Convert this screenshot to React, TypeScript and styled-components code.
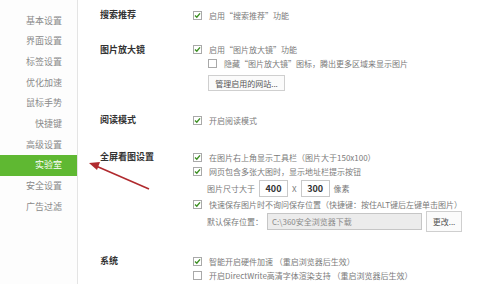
import React from 'react';
import styled, { createGlobalStyle } from 'styled-components';

const GlobalStyle = createGlobalStyle`
  html, body {
    margin: 0;
    padding: 0;
    background: #ffffff;
  }
  * {
    box-sizing: border-box;
  }
`;

const font = `"Microsoft YaHei", "Noto Sans CJK SC", "Noto Sans", sans-serif`;

const navItems = ['基本设置', '界面设置', '标签设置', '优化加速', '鼠标手势', '快捷键', '高级设置', '实验室', '安全设置', '广告过滤'];

const Check: React.FC<{ checked?: boolean }> = ({ checked }) => (
  <Box>
    {checked && (
      <svg width="7" height="7" viewBox="0 0 7 7">
        <path d="M1 3.6 L2.8 5.3 L6 1.4" fill="none" stroke="#3c8f22" strokeWidth="1.4" />
      </svg>
    )}
  </Box>
);

const App: React.FC = () => {
  return (
    <>
      <GlobalStyle />
      <Page>
        <Sidebar>
          {navItems.map((item) => (
            <NavItem key={item} $active={item === '实验室'}>
              {item}
            </NavItem>
          ))}
        </Sidebar>
        <Content>
          <Section $top={8}>
            <Label>搜索推荐</Label>
            <Options>
              <Option>
                <Check checked />
                启用“搜索推荐”功能
              </Option>
            </Options>
          </Section>

          <Section $top={21}>
            <Label>图片放大镜</Label>
            <Options>
              <Option $h={13}>
                <Check checked />
                启用“图片放大镜”功能
              </Option>
              <Option $h={14} $indent>
                <Check />
                隐藏“图片放大镜”图标，腾出更多区域来显示图片
              </Option>
              <Button $width={77} $height={16} $top={5} $left={15}>
                管理启用的网站...
              </Button>
            </Options>
          </Section>

          <Section $top={22}>
            <Label>阅读模式</Label>
            <Options>
              <Option>
                <Check checked />
                开启阅读模式
              </Option>
            </Options>
          </Section>

          <Section $top={23}>
            <Label>全屏看图设置</Label>
            <Options>
              <Option>
                <Check checked />
                在图片右上角显示工具栏（图片大于150x100）
              </Option>
              <Option $h={15}>
                <Check checked />
                网页包含多张大图时，显示地址栏提示按钮
              </Option>
              <FieldRow $h={17} $top={1}>
                图片尺寸大于
                <SizeInput>400</SizeInput>
                X
                <SizeInput>300</SizeInput>
                像素
              </FieldRow>
              <Option>
                <Check checked />
                快速保存图片时不询问保存位置（快捷键：按住ALT键后左键单击图片）
              </Option>
              <FieldRow $h={18} $top={1}>
                默认保存位置：
                <PathInput>C:\360安全浏览器下载</PathInput>
                <Button $width={36} $height={21} $top={0} $left={0}>
                  更改...
                </Button>
              </FieldRow>
            </Options>
          </Section>

          <Section $top={24}>
            <Label>系统</Label>
            <Options>
              <Option>
                <Check checked />
                智能开启硬件加速 （重启浏览器后生效）
              </Option>
              <Option>
                <Check />
                开启DirectWrite高清字体渲染支持 （重启浏览器后生效）
              </Option>
            </Options>
          </Section>
        </Content>

        <Arrow width="488" height="284" viewBox="0 0 488 284">
          <line x1="149" y1="189" x2="96" y2="166" stroke="#b02a2e" strokeWidth="1.6" />
          <polygon points="89,163 100,162 97,170" fill="#b02a2e" />
        </Arrow>
      </Page>
    </>
  );
};

const Page = styled.div`
  position: relative;
  display: flex;
  width: 488px;
  height: 284px;
  overflow: hidden;
  background: #ffffff;
  font-family: ${font};
`;

const Sidebar = styled.nav`
  flex: 0 0 78px;
  padding-top: 10.6px;
  border-right: 1px solid #e4e4e4;
  background: #fdfdfd;
`;

const NavItem = styled.div<{ $active?: boolean }>`
  height: 20.67px;
  padding-right: 15px;
  line-height: 20.67px;
  text-align: right;
  font-size: 9px;
  color: ${({ $active }) => ($active ? '#ffffff' : '#8a8a8a')};
  background: ${({ $active }) => ($active ? '#5fb832' : 'transparent')};
`;

const Content = styled.main`
  flex: 1;
  padding-left: 22px;
`;

const Section = styled.section<{ $top: number }>`
  display: flex;
  margin-top: ${({ $top }) => $top}px;
`;

const Label = styled.div`
  flex: 0 0 93px;
  height: 14px;
  line-height: 14px;
  font-size: 9px;
  font-weight: bold;
  color: #333333;
`;

const Options = styled.div`
  display: flex;
  flex-direction: column;
  align-items: flex-start;
`;

const Option = styled.div<{ $h?: number; $indent?: boolean }>`
  display: flex;
  align-items: center;
  gap: 7px;
  height: ${({ $h }) => $h ?? 14}px;
  padding-left: ${({ $indent }) => ($indent ? 15 : 0)}px;
  font-size: 8px;
  color: #7a7a7a;
  white-space: nowrap;
`;

const Box = styled.span`
  display: flex;
  align-items: center;
  justify-content: center;
  flex: 0 0 9px;
  width: 9px;
  height: 9px;
  border: 1px solid #a9a9a9;
  background: #ffffff;
`;

const FieldRow = styled.div<{ $h: number; $top: number }>`
  display: flex;
  align-items: center;
  gap: 4px;
  height: ${({ $h }) => $h}px;
  margin-top: ${({ $top }) => $top}px;
  padding-left: 14px;
  font-size: 8px;
  color: #7a7a7a;
  white-space: nowrap;
`;

const SizeInput = styled.span`
  display: flex;
  align-items: center;
  justify-content: center;
  width: 29px;
  height: 17px;
  border: 1px solid #c9c9c9;
  font-size: 9px;
  font-weight: bold;
  color: #333333;
`;

const PathInput = styled.span`
  display: flex;
  align-items: center;
  width: 155px;
  height: 17px;
  padding-left: 4px;
  border: 1px solid #c6c6c6;
  background: #ececec;
  font-size: 8px;
  color: #8a8a8a;
`;

const Button = styled.span<{ $width: number; $height: number; $top: number; $left: number }>`
  display: flex;
  align-items: center;
  justify-content: center;
  width: ${({ $width }) => $width}px;
  height: ${({ $height }) => $height}px;
  margin-top: ${({ $top }) => $top}px;
  margin-left: ${({ $left }) => $left}px;
  border: 1px solid #cfcfcf;
  background: #fbfbfb;
  font-size: 8px;
  color: #555555;
`;

const Arrow = styled.svg`
  position: absolute;
  left: 0;
  top: 0;
  pointer-events: none;
`;

export default App;
